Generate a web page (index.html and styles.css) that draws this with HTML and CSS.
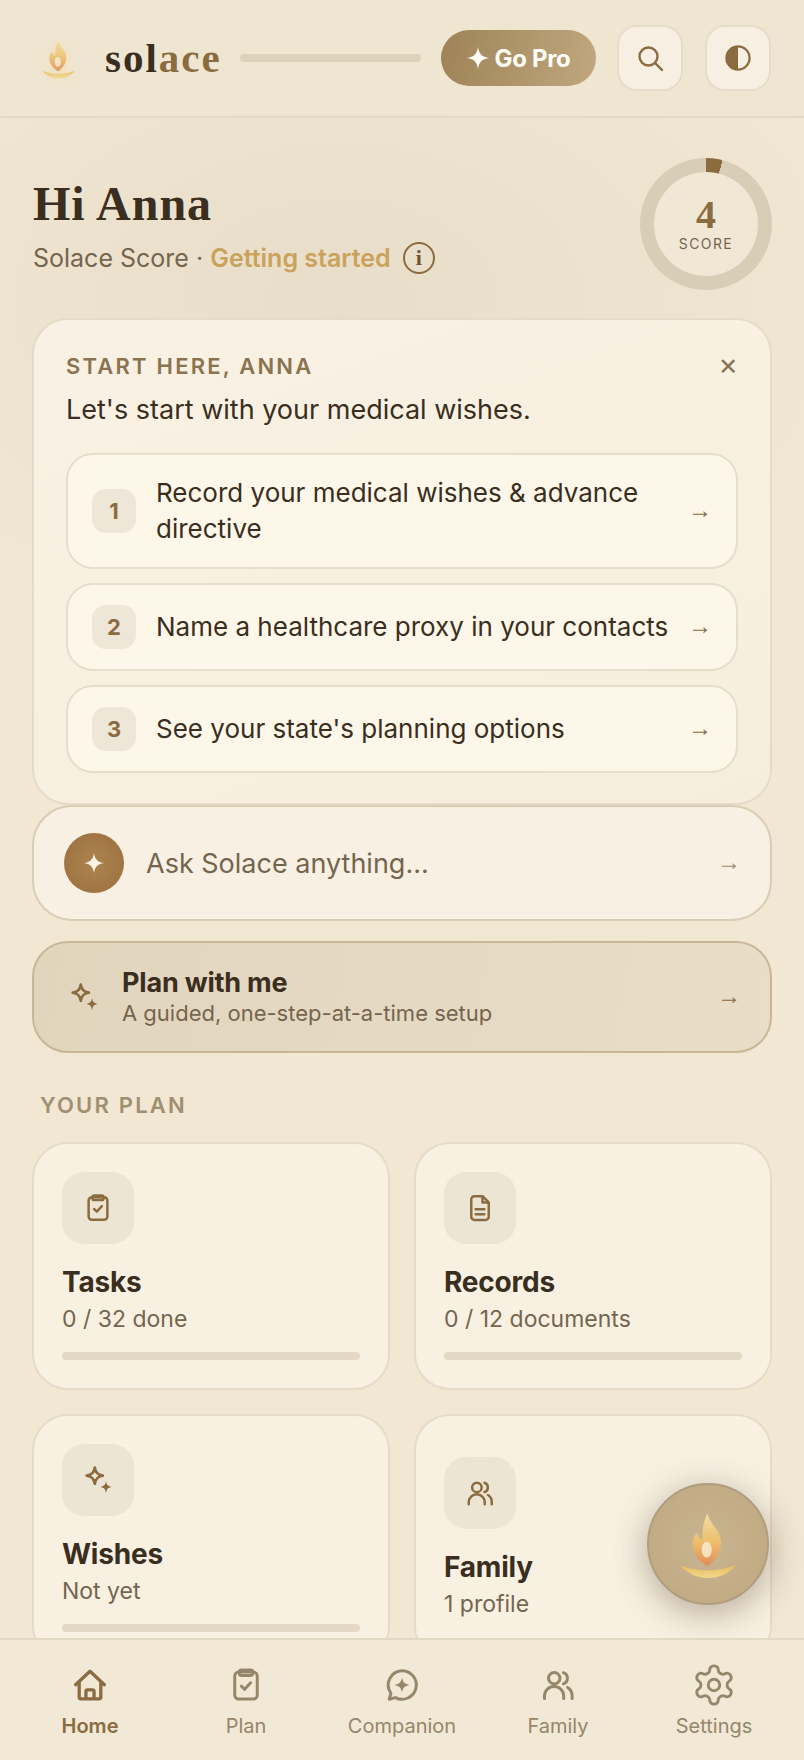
FILE: index.html
```html
<!DOCTYPE html>
<html lang="en">
<head>
<meta charset="utf-8">
<title>Solace</title>
<link rel="stylesheet" href="styles.css">
</head>
<body>
<svg class="defs" width="0" height="0" aria-hidden="true">
  <defs>
    <linearGradient id="flameGrad" x1="0" y1="0" x2="0" y2="1">
      <stop offset="0" stop-color="#F1DDA0"/>
      <stop offset=".55" stop-color="#EDBE6C"/>
      <stop offset="1" stop-color="#E08C58"/>
    </linearGradient>
    <linearGradient id="bowlGrad" x1="0" y1="0" x2="0" y2="1">
      <stop offset="0" stop-color="#E9BC5E"/>
      <stop offset="1" stop-color="#F2D88E"/>
    </linearGradient>
    <symbol id="flame" viewBox="0 0 56 66">
      <path fill="url(#flameGrad)" d="M27.3 0C30 12 41 17 41 30C41 42 33 49 27.3 53.3C20 48 12.7 42 12.7 31.7C12.7 27 14 23 16.7 20C17.5 23 20 26 22.7 26.7C21.5 17 24 8 27.3 0Z"/>
      <ellipse cx="26.7" cy="36.7" rx="5" ry="8" fill="#F8EBD2" opacity=".85"/>
      <path fill="url(#bowlGrad)" d="M0 52C15 59 40 59 55.7 52C48 62 37 65 28 65C18 65 8 61 0 52Z"/>
    </symbol>
    <symbol id="sparkles" viewBox="0 0 28 28">
      <path fill="none" stroke="currentColor" stroke-width="2.6" stroke-linejoin="round" d="M11 2.5C11.8 7.3 13.7 9.2 18.5 10C13.7 10.8 11.8 12.7 11 17.5C10.2 12.7 8.3 10.8 3.5 10C8.3 9.2 10.2 7.3 11 2.5Z"/>
      <path fill="currentColor" d="M21.5 15C22.1 18.6 23 19.5 26.5 20.5C23 21.5 22.1 22.4 21.5 26.5C20.9 22.4 20 21.5 16.5 20.5C20 19.5 20.9 18.6 21.5 15Z"/>
    </symbol>
    <symbol id="clipboard" viewBox="0 0 24 24">
      <rect x="4.5" y="3.4" width="15" height="18" rx="2.6" fill="none" stroke="currentColor" stroke-width="2"/>
      <rect x="7.6" y="2" width="8.8" height="3.6" rx="1.3" fill="none" stroke="currentColor" stroke-width="2"/>
      <path fill="none" stroke="currentColor" stroke-width="2" stroke-linecap="round" stroke-linejoin="round" d="M8.9 12.8l2.2 2.1 4-4.4"/>
    </symbol>
    <symbol id="people" viewBox="0 0 24 24">
      <circle cx="9.5" cy="7.5" r="3.8" fill="none" stroke="currentColor" stroke-width="2"/>
      <path fill="none" stroke="currentColor" stroke-width="2" stroke-linecap="round" d="M3 21v-1.6A6.4 6.4 0 0 1 9.4 13a6.4 6.4 0 0 1 6.4 6.4V21M15.6 3.8a3.9 3.9 0 0 1 0 7.4M18.4 13.6A6.4 6.4 0 0 1 21.4 19v2"/>
    </symbol>
    <symbol id="star4" viewBox="0 0 24 24">
      <path fill="currentColor" d="M12 1C13 8 16 11 23 12C16 13 13 16 12 23C11 16 8 13 1 12C8 11 11 8 12 1Z"/>
    </symbol>
  </defs>
</svg>

<header class="topbar">
  <svg class="logo-mark"><use href="#flame"/></svg>
  <span class="wordmark">sol<span class="wordmark-accent">ace</span></span>
  <span class="top-progress"></span>
  <button class="go-pro"><svg class="go-pro-star"><use href="#star4"/></svg>Go Pro</button>
  <button class="square-btn" aria-label="Search">
    <svg viewBox="0 0 28 28" class="square-icon"><circle cx="12.5" cy="12.5" r="9" fill="none" stroke="currentColor" stroke-width="2.4"/><path d="M19.2 19.2L26 26" fill="none" stroke="currentColor" stroke-width="2.4" stroke-linecap="round"/></svg>
  </button>
  <button class="square-btn" aria-label="Theme">
    <svg viewBox="0 0 28 28" class="square-icon"><circle cx="14" cy="14" r="11.6" fill="none" stroke="currentColor" stroke-width="2.2"/><path d="M14 2.4A11.6 11.6 0 0 0 14 25.6Z" fill="currentColor"/></svg>
  </button>
</header>

<main class="content">
  <section class="greeting">
    <div class="greeting-text">
      <h1 class="hello">Hi Anna</h1>
      <p class="score-line">Solace Score · <span class="score-state">Getting started</span><span class="info-badge">i</span></p>
    </div>
    <div class="score-ring">
      <div class="score-inner">
        <span class="score-num">4</span>
        <span class="score-label">SCORE</span>
      </div>
    </div>
  </section>

  <section class="start-card">
    <div class="start-head">
      <span class="start-eyebrow">START HERE, ANNA</span>
      <span class="start-close">×</span>
    </div>
    <p class="start-lead">Let's start with your medical wishes.</p>
    <ol class="steps">
      <li class="step step-tall"><span class="step-num">1</span><span class="step-text">Record your medical wishes &amp; advance directive</span><span class="arrow">→</span></li>
      <li class="step"><span class="step-num">2</span><span class="step-text">Name a healthcare proxy in your contacts</span><span class="arrow">→</span></li>
      <li class="step"><span class="step-num">3</span><span class="step-text">See your state's planning options</span><span class="arrow">→</span></li>
    </ol>
  </section>

  <section class="ask-card">
    <span class="ask-orb"><svg class="ask-star"><use href="#star4"/></svg></span>
    <span class="ask-text">Ask Solace anything...</span>
    <span class="arrow arrow-muted">→</span>
  </section>

  <section class="plan-card">
    <svg class="plan-icon"><use href="#sparkles"/></svg>
    <div class="plan-copy">
      <div class="plan-title">Plan with me</div>
      <div class="plan-sub">A guided, one-step-at-a-time setup</div>
    </div>
    <span class="arrow">→</span>
  </section>

  <h2 class="section-title">YOUR PLAN</h2>

  <section class="tile-grid">
    <article class="tile">
      <span class="tile-icon"><svg class="tile-svg"><use href="#clipboard"/></svg></span>
      <h3 class="tile-title">Tasks</h3>
      <p class="tile-sub">0 / 32 done</p>
      <span class="tile-bar"></span>
    </article>
    <article class="tile">
      <span class="tile-icon">
        <svg class="tile-svg" viewBox="0 0 24 24"><path fill="none" stroke="currentColor" stroke-width="2" stroke-linejoin="round" d="M14 2.5H7.5A2.5 2.5 0 0 0 5 5v14a2.5 2.5 0 0 0 2.5 2.5h9A2.5 2.5 0 0 0 19 19V7.5z"/><path fill="none" stroke="currentColor" stroke-width="2" stroke-linejoin="round" d="M14 2.5v5h5"/><path fill="none" stroke="currentColor" stroke-width="2" stroke-linecap="round" d="M8.5 13h7M8.5 17h7"/></svg>
      </span>
      <h3 class="tile-title">Records</h3>
      <p class="tile-sub">0 / 12 documents</p>
      <span class="tile-bar"></span>
    </article>
    <article class="tile">
      <span class="tile-icon"><svg class="tile-svg"><use href="#sparkles"/></svg></span>
      <h3 class="tile-title">Wishes</h3>
      <p class="tile-sub">Not yet</p>
      <span class="tile-bar"></span>
    </article>
    <article class="tile">
      <span class="tile-icon"><svg class="tile-svg"><use href="#people"/></svg></span>
      <h3 class="tile-title">Family</h3>
      <p class="tile-sub">1 profile</p>
    </article>
  </section>
</main>

<button class="fab" aria-label="Open Solace"><svg class="fab-mark"><use href="#flame"/></svg></button>

<nav class="tabbar">
  <a class="tab tab-active">
    <svg class="tab-icon" viewBox="0 0 24 24"><path fill="none" stroke="currentColor" stroke-width="2.2" stroke-linecap="round" stroke-linejoin="round" d="M2.4 11.8L12 2.8l9.6 9M4.8 10v10.200a1 1 0 0 0 1 1h12.400a1 1 0 0 0 1-1V10"/><path fill="none" stroke="currentColor" stroke-width="2.2" stroke-linejoin="round" d="M9.3 21v-4.700a1 1 0 0 1 1-1h3.400a1 1 0 0 1 1 1V21"/></svg>
    <span class="tab-label">Home</span>
  </a>
  <a class="tab">
    <svg class="tab-icon"><use href="#clipboard"/></svg>
    <span class="tab-label">Plan</span>
  </a>
  <a class="tab">
    <svg class="tab-icon" viewBox="0 0 24 24"><path fill="none" stroke="currentColor" stroke-width="2" stroke-linejoin="round" d="M12 2.5a9.5 9.5 0 1 1-4.400 17.900L3.500 21.500l1.100-4A9.500 9.500 0 0 1 12 2.500z"/><path fill="currentColor" d="M12 7c.6 3.200 1.800 4.400 5 5-3.200.6-4.400 1.800-5 5-.6-3.200-1.800-4.400-5-5 3.200-.6 4.400-1.800 5-5z"/></svg>
    <span class="tab-label">Companion</span>
  </a>
  <a class="tab">
    <svg class="tab-icon"><use href="#people"/></svg>
    <span class="tab-label">Family</span>
  </a>
  <a class="tab">
    <svg class="tab-icon tab-icon-gear" viewBox="0 0 24 24"><path fill="none" stroke="currentColor" stroke-width="1.5" stroke-linecap="round" stroke-linejoin="round" d="M12.220 2h-.440a2 2 0 0 0-2 2v.180a2 2 0 0 1-1 1.730l-.430.250a2 2 0 0 1-2 0l-.150-.080a2 2 0 0 0-2.730.730l-.220.380a2 2 0 0 0 .730 2.730l.150.100a2 2 0 0 1 1 1.720v.510a2 2 0 0 1-1 1.740l-.150.090a2 2 0 0 0-.730 2.730l.220.380a2 2 0 0 0 2.730.730l.150-.080a2 2 0 0 1 2 0l.430.250a2 2 0 0 1 1 1.730V20a2 2 0 0 0 2 2h.440a2 2 0 0 0 2-2v-.180a2 2 0 0 1 1-1.730l.430-.250a2 2 0 0 1 2 0l.150.080a2 2 0 0 0 2.730-.730l.220-.390a2 2 0 0 0-.730-2.730l-.150-.080a2 2 0 0 1-1-1.740v-.500a2 2 0 0 1 1-1.740l.150-.090a2 2 0 0 0 .730-2.730l-.220-.380a2 2 0 0 0-2.730-.730l-.150.080a2 2 0 0 1-2 0l-.430-.250a2 2 0 0 1-1-1.730V4a2 2 0 0 0-2-2z"/><circle cx="12" cy="12" r="3" fill="none" stroke="currentColor" stroke-width="1.5"/></svg>
    <span class="tab-label">Settings</span>
  </a>
</nav>
</body>
</html>
```
FILE: styles.css
```css
* { box-sizing: border-box; }
html, body { margin: 0; padding: 0; }
body {
  position: relative;
  width: 804px;
  height: 1760px;
  overflow: hidden;
  font-family: Inter, "Liberation Sans", sans-serif;
  color: #3A2E20;
  background:
    radial-gradient(560px 360px at 340px 300px, #E8DDC8 0%, rgba(232,221,200,0) 100%),
    #F1E7D3;
}
.defs { position: absolute; }
button { font-family: inherit; padding: 0; cursor: pointer; }

/* top bar */
.topbar {
  display: flex;
  align-items: center;
  height: 118px;
  padding: 0 33px 0 42px;
  border-bottom: 2px solid #E3D9C4;
  background: #EFE6D2;
}
.logo-mark {
  flex: none;
  width: 33px;
  height: 39px;
  margin-top: 2px;
  filter: drop-shadow(0 0 5px rgba(243,216,150,.7));
  opacity: .85;
}
.wordmark {
  flex: none;
  margin-left: 30px;
  font-family: "Liberation Serif", serif;
  font-weight: 700;
  font-size: 41px;
  letter-spacing: 2px;
  color: #3A2E20;
}
.wordmark-accent { color: #8B6B40; }
.top-progress {
  flex: none;
  width: 181px;
  height: 8px;
  margin-left: 18px;
  border-radius: 4px;
  background: #DDD2BC;
}
.go-pro {
  display: flex;
  align-items: center;
  justify-content: center;
  flex: none;
  gap: 4px;
  width: 155px;
  height: 56px;
  margin: 0 21px 0 auto;
  border: 0;
  border-radius: 28px;
  background: linear-gradient(100deg, #9F8357, #C0A77E);
  color: #FFFDF7;
  font-size: 24px;
  font-weight: 700;
  letter-spacing: -.3px;
}
.go-pro-star { width: 24px; height: 24px; }
.square-btn {
  display: flex;
  align-items: center;
  justify-content: center;
  flex: none;
  width: 66px;
  height: 66px;
  border: 2px solid #E6DCC9;
  border-radius: 20px;
  background: #F7F0E2;
  color: #8B6B40;
}
.square-btn + .square-btn { margin-left: 22px; }
.square-icon { width: 28px; height: 28px; }

/* main flow */
.content { padding: 0 32px; }
.greeting {
  display: flex;
  justify-content: space-between;
  align-items: flex-start;
  height: 200px;
  padding: 40px 0 0 1px;
}
.greeting-text { padding-top: 16px; }
.hello {
  margin: 0;
  font-family: "Liberation Serif", serif;
  font-weight: 700;
  font-size: 48px;
  line-height: 60px;
  letter-spacing: 1px;
  color: #3A2E20;
}
.score-line {
  display: flex;
  align-items: center;
  margin: 7px 0 0;
  font-size: 25px;
  line-height: 34px;
  color: #75654F;
  white-space: pre;
}
.score-state { font-weight: 600; color: #C9A35C; }
.info-badge {
  display: flex;
  align-items: center;
  justify-content: center;
  width: 32px;
  height: 32px;
  margin-left: 12px;
  border: 2px solid #8B6B40;
  border-radius: 50%;
  font-family: "Liberation Serif", serif;
  font-weight: 700;
  font-size: 22px;
  color: #6E5432;
}
.score-ring {
  display: flex;
  align-items: center;
  justify-content: center;
  flex: none;
  width: 132px;
  height: 132px;
  border-radius: 50%;
  background: conic-gradient(#8B6B40 0 14.4deg, #D8CDB7 14.4deg 360deg);
}
.score-inner {
  display: flex;
  flex-direction: column;
  align-items: center;
  justify-content: center;
  width: 104px;
  height: 104px;
  border-radius: 50%;
  background: #F0E7D5;
}
.score-num {
  padding-top: 1px;
  font-family: "Liberation Serif", serif;
  font-weight: 700;
  font-size: 40px;
  line-height: 40px;
  color: #8B6B40;
}
.score-label {
  margin-top: -1px;
  font-size: 14px;
  line-height: 20px;
  letter-spacing: 1.4px;
  color: #75654F;
}

/* start card */
.start-card {
  height: 487px;
  padding: 32px 32px 0;
  border: 2px solid #E5DBC8;
  border-radius: 36px;
  background: linear-gradient(160deg, #F9F2E4, #F6EEDD);
}
.start-head {
  display: flex;
  align-items: center;
  justify-content: space-between;
  height: 28px;
}
.start-eyebrow {
  font-size: 22px;
  font-weight: 600;
  letter-spacing: 2.2px;
  color: #8B7350;
}
.start-close { margin-top: -4px; font-size: 30px; font-weight: 400; line-height: 28px; color: #8B7350; }
.start-lead {
  margin: 12px 0 0;
  font-size: 27px;
  line-height: 36px;
  color: #3A2E20;
}
.steps {
  display: flex;
  flex-direction: column;
  gap: 14px;
  margin: 25px 0 0;
  padding: 0;
  list-style: none;
}
.step {
  display: flex;
  align-items: center;
  height: 88px;
  padding: 0 24px;
  border: 2px solid #E6DDCB;
  border-radius: 27px;
  background: #FDF7E9;
  font-size: 26px;
  line-height: 36px;
}
.step-tall { height: 116px; }
.step-num {
  display: flex;
  flex: none;
  align-items: center;
  justify-content: center;
  width: 44px;
  height: 44px;
  margin-right: 20px;
  border-radius: 14px;
  background: #EEE6D6;
  font-size: 22px;
  font-weight: 700;
  color: #8B6B40;
}
.step-text { flex: 1; color: #3A2E20; }
.arrow {
  flex: none;
  padding-bottom: 3px;
  font-family: "Liberation Sans", sans-serif;
  font-size: 24px;
  line-height: 24px;
  color: #8B6B40;
}
.arrow-muted { color: #A08B68; }

/* ask */
.ask-card {
  display: flex;
  align-items: center;
  height: 116px;
  padding: 0 29px 0 30px;
  border: 2px solid #D9CDB5;
  border-radius: 40px;
  background: #F8F1E3;
}
.ask-orb {
  display: flex;
  align-items: center;
  justify-content: center;
  flex: none;
  width: 60px;
  height: 60px;
  border-radius: 50%;
  background: radial-gradient(circle, #AC844E 0%, #A07543 70%);
  color: #FBF3E2;
}
.ask-star { width: 22px; height: 24px; }
.ask-text { flex: 1; margin-left: 22px; font-size: 27px; color: #75654F; }

/* plan with me */
.plan-card {
  display: flex;
  align-items: center;
  height: 112px;
  margin-top: 20px;
  padding: 0 29px 0 35px;
  border: 2px solid #C8B696;
  border-radius: 36px;
  background: linear-gradient(100deg, #E2D5BE, #E9DDC8);
}
.plan-icon { flex: none; width: 30px; height: 30px; color: #8B6B40; }
.plan-copy { flex: 1; margin-left: 23px; }
.plan-title { font-size: 27px; line-height: 32px; font-weight: 700; letter-spacing: -.2px; color: #3A2E20; }
.plan-sub { font-size: 22px; line-height: 28px; color: #75654F; }

.section-title {
  margin: 38px 0 0 8px;
  font-size: 22px;
  line-height: 28px;
  font-weight: 600;
  letter-spacing: 2.2px;
  color: #A08F70;
}

/* tiles */
.tile-grid {
  display: grid;
  grid-template-columns: 1fr 1fr;
  grid-auto-rows: 248px;
  gap: 24px;
  margin-top: 23px;
}
.tile {
  display: flex;
  flex-direction: column;
  justify-content: center;
  padding: 0 28px;
  border: 2px solid #E5DBC8;
  border-radius: 36px;
  background: #F8F1E2;
}
.tile-icon {
  display: flex;
  align-items: center;
  justify-content: center;
  flex: none;
  width: 72px;
  height: 72px;
  border-radius: 22px;
  background: #EDE5D3;
  color: #8B6B40;
}
.tile-svg { width: 30px; height: 30px; }
.tile-title {
  margin: 20px 0 0;
  font-size: 28px;
  line-height: 36px;
  font-weight: 700;
  letter-spacing: -.2px;
  color: #3A2E20;
}
.tile-sub { margin: 3px 0 0; font-size: 23px; line-height: 32px; color: #75654F; }
.tile-bar { display: block; flex: none; height: 8px; margin-top: 17px; border-radius: 4px; background: #E2D8C4; }

/* floating button */
.fab {
  position: absolute;
  left: 647px;
  top: 1483px;
  display: flex;
  align-items: center;
  justify-content: center;
  width: 122px;
  height: 122px;
  border: 2px solid #AE9D7E;
  border-radius: 50%;
  background: radial-gradient(circle, #C8B490 0%, #BEA881 100%);
  box-shadow: 0 8px 36px rgba(70,50,25,.38);
}
.fab-mark { width: 56px; height: 66px; margin-top: 3px; }

/* tab bar */
.tabbar {
  position: absolute;
  left: 0;
  right: 0;
  bottom: 0;
  display: grid;
  grid-template-columns: repeat(5, 156px);
  height: 122px;
  padding: 0 12px;
  border-top: 2px solid #E3D8C3;
  background: #F2E8D6;
}
.tab {
  display: flex;
  flex-direction: column;
  align-items: center;
  padding-top: 27px;
  color: #96866A;
}
.tab-active { color: #8B6B40; }
.tab-icon { width: 36px; height: 36px; }
.tab-icon-gear { width: 46px; height: 46px; margin: -5px 0; }
.tab-label { margin-top: 8px; font-size: 20px; line-height: 30px; }
.tab-active .tab-label { font-weight: 600; }
```
